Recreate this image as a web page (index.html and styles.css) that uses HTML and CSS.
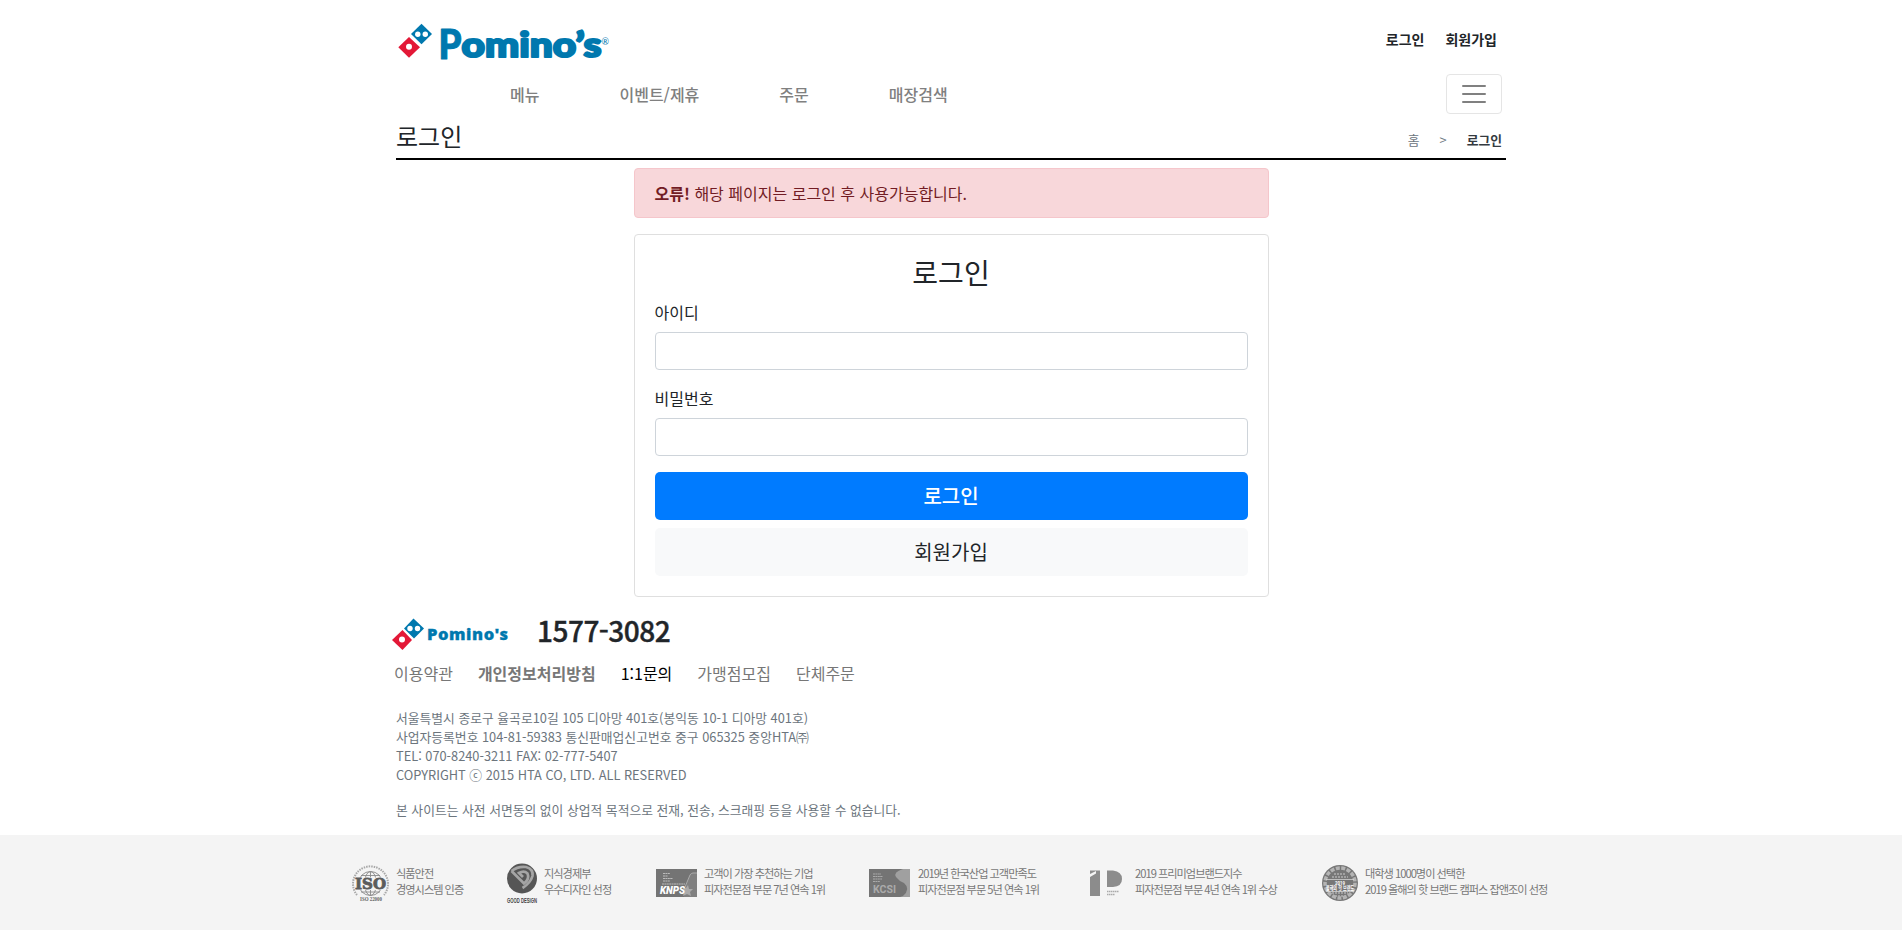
FILE: index.html
```html
<!DOCTYPE html>
<html lang="ko">
<head>
<meta charset="utf-8">
<title>로그인</title>
<link rel="stylesheet" href="styles.css">
</head>
<body>
<div class="container">
  <header class="top">
    <a class="brand">
      <svg class="brand-logo" width="216" height="44" viewBox="0 0 216 44">
        <path d="M25.500 3.700L36 14 25.500 24.300 15 14Z" fill="#0078ae"/>
        <path d="M13 17L24 27.300 13 37.700 2.300 27.300Z" fill="#e31837"/>
        <circle cx="21.800" cy="14.200" r="2.700" fill="#fff"/><circle cx="29.300" cy="14.200" r="2.700" fill="#fff"/>
        <circle cx="13" cy="26.800" r="3" fill="#fff"/>
        <text class="cap" x="42.500" y="38.500" textLength="23" lengthAdjust="spacingAndGlyphs">P</text>
        <text class="word" x="65.500" y="37" textLength="140" lengthAdjust="spacingAndGlyphs">omino’s</text>
        <text class="reg" x="205.500" y="25">®</text>
      </svg>
    </a>
    <nav class="user"><a>로그인</a><a>회원가입</a></nav>
  </header>
  <div class="navbar">
    <nav class="menu"><a>메뉴</a><a>이벤트/제휴</a><a>주문</a><a>매장검색</a></nav>
    <button class="toggler" aria-label="메뉴 열기">
      <svg width="30" height="30" viewBox="0 0 30 30"><path d="M4 7h22M4 15h22M4 23h22" stroke="#808080" stroke-width="2" stroke-linecap="round"/></svg>
    </button>
  </div>
  <div class="title-row">
    <h4>로그인</h4>
    <ol class="crumbs"><li>홈</li><li>&gt;</li><li class="active">로그인</li></ol>
  </div>
  <main class="login">
    <div class="alert"><strong>오류!</strong> 해당 페이지는 로그인 후 사용가능합니다.</div>
    <form class="card">
      <h3>로그인</h3>
      <label for="uid">아이디</label><input id="uid" type="text">
      <label for="upw">비밀번호</label><input id="upw" type="password">
      <button type="button" class="btn primary">로그인</button>
      <button type="button" class="btn light">회원가입</button>
    </form>
  </main>
  <footer class="footer">
    <div class="foot-head">
      <svg class="foot-logo" width="122" height="34" viewBox="0 0 122 34">
        <path d="M21.500 1.500L32 11.500 22 21.500 12 11.500Z" fill="#0078ae"/>
        <path d="M10.500 13L20 23 10.500 33 0 23Z" fill="#e31837"/>
        <circle cx="18" cy="11.500" r="2.700" fill="#fff"/><circle cx="25.500" cy="11.500" r="2.700" fill="#fff"/>
        <circle cx="10" cy="22.500" r="3" fill="#fff"/>
        <text class="foot-word" x="35" y="23" textLength="81">Pomino's</text>
      </svg>
      <span class="phone">1577-3082</span>
    </div>
    <ul class="links"><li>이용약관</li><li class="strong">개인정보처리방침</li><li class="dark">1:1문의</li><li>가맹점모집</li><li>단체주문</li></ul>
    <address>서울특별시 종로구 율곡로10길 105 디아망 401호(봉익동 10-1 디아망 401호)<br>사업자등록번호 104-81-59383 통신판매업신고번호 중구 065325 중앙HTA㈜<br>TEL: 070-8240-3211 FAX: 02-777-5407<br>COPYRIGHT ⓒ 2015 HTA CO, LTD. ALL RESERVED</address>
    <p class="notice">본 사이트는 사전 서면동의 없이 상업적 목적으로 전재, 전송, 스크래핑 등을 사용할 수 없습니다.</p>
  </footer>
</div>
<section class="awards">
  <ul>
    <li class="a1">
      <svg width="40" height="42" viewBox="0 0 40 42">
        <path d="M7 33A17.500 17.500 0 1 1 34 33" fill="none" stroke="#a8a8a8" stroke-width="2" stroke-dasharray="1.500 1"/>
        <g fill="none" stroke="#8a8a8a" stroke-width="0.900"><circle cx="20.500" cy="21.500" r="12"/><ellipse cx="20.500" cy="21.500" rx="6" ry="12"/><path d="M20.500 9.500v24M11 13.500h19M11 30h19"/></g>
        <path d="M5 15.500h31v12.500H5z" fill="#f4f4f4"/>
        <text class="iso" x="5" y="27" textLength="31" lengthAdjust="spacingAndGlyphs">ISO</text>
        <text class="iso-sub" x="10" y="38.500" textLength="22" lengthAdjust="spacingAndGlyphs">ISO 22000</text>
      </svg>
      <p>식품안전<br>경영시스템 인증</p>
    </li>
    <li class="a2">
      <svg width="32" height="44" viewBox="0 0 32 44">
        <circle cx="16" cy="16.500" r="15" fill="#565656"/>
        <path d="M5.500 9L18 21.500Q24 17 21.500 11.500Q18 8 13 11L17 15M5.500 9Q12 4 20 5Q27.500 7 26.500 14Q24.500 21 16.500 26" fill="none" stroke="#a5a5a5" stroke-width="2.700"/>
        <text class="good" x="1" y="41" textLength="30" lengthAdjust="spacingAndGlyphs">GOOD DESIGN</text>
      </svg>
      <p>지식경제부<br>우수디자인 선정</p>
    </li>
    <li class="a3">
      <svg width="41" height="28" viewBox="0 0 41 28">
        <path d="M0 0h41v28H0z" fill="#747474"/>
        <path d="M29 19L34 6Q35 4 37 4h4v24H28z" fill="#808080"/><path d="M29 18L34 6Q35 4 37 4h4" fill="none" stroke="#aaa"/>
        <path d="M7 4.500h7M7 7h5M7 9.500h10M7 12h7M6 15h23" stroke="#bbb" stroke-width="1" stroke-dasharray="2 .4"/>
        <path d="M32 16l1 4 4 0-3 3 1 4-4-2-4 2 1-4-2-3 4-1z" fill="#aaa"/>
        <text class="knps" x="4" y="25" textLength="25" lengthAdjust="spacingAndGlyphs">KNPS</text>
      </svg>
      <p>고객이 가장 추천하는 기업<br>피자전문점 부문 7년 연속 1위</p>
    </li>
    <li class="a4">
      <svg width="41" height="28" viewBox="0 0 41 28">
        <path d="M0 0h41v28H0z" fill="#747474"/>
        <path d="M41 0H34Q24 3 27 8Q30 12 35 14Q42 20 34 27L31 28H41Z" fill="#a0a0a0"/>
        <path d="M4 5h8M4 7.500h10M4 10h9M4 12.500h7" stroke="#aaa" stroke-dasharray="2 .4"/>
        <text class="kcsi" x="4" y="24" textLength="23" lengthAdjust="spacingAndGlyphs">KCSI</text>
      </svg>
      <p>2019년 한국산업 고객만족도<br>피자전문점 부문 5년 연속 1위</p>
    </li>
    <li class="a5">
      <svg width="44" height="34" viewBox="0 0 44 34">
        <path d="M6 4.500H16V30H6V11L12 7.500V5L6 8Z" fill="#8c8c8c"/>
        <path d="M23 4.500H29Q38 5.500 38 13T29 21H23Z" fill="#8c8c8c"/>
        <path d="M23 25.500h12M23 28.500h8" stroke="#aaa" stroke-width="1.300" stroke-dasharray="1.500 .5"/>
      </svg>
      <p>2019 프리미엄브랜드지수<br>피자전문점 부문 4년 연속 1위 수상</p>
    </li>
    <li class="a6">
      <svg width="38" height="38" viewBox="0 0 38 38">
        <circle cx="19" cy="18" r="18" fill="#777"/>
        <circle cx="19" cy="18" r="15" fill="none" stroke="#b4b4b4" stroke-width="3.500" stroke-dasharray="4 1.500"/>
        <path d="M11 12h16M13 9h12M11 28h16M14 31h10" stroke="#b0b0b0" stroke-width="1.500" stroke-dasharray="2 1"/>
        <path d="M5 14.500h28M5 26.500h28" stroke="#ddd" stroke-width=".7"/>
        <text class="seal" x="14" y="19.500" textLength="10" lengthAdjust="spacingAndGlyphs">2019</text>
        <text class="seal-kr" x="5" y="25" textLength="28" lengthAdjust="spacingAndGlyphs">올해의 핫 브랜드</text>
      </svg>
      <p>대학생 1000명이 선택한<br>2019 올해의 핫 브랜드 캠퍼스 잡앤조이 선정</p>
    </li>
  </ul>
</section>
</body>
</html>
```
FILE: styles.css
```css
* { box-sizing: border-box; }
body { margin: 0; font: 400 16px/24px "Noto Sans CJK KR", sans-serif; color: #212529; background: #fff; height: 930px; display: flex; flex-direction: column; }
h3, h4, p, ul, ol { margin: 0; padding: 0; font-weight: 400; }
ul, ol { list-style: none; }
svg { overflow: visible; }
.container { width: 1110px; margin: 0 auto; flex: none; height: 835px; }
.top { height: 70px; display: flex; justify-content: space-between; padding-top: 20px; }
.brand-logo { display: block; }
.cap, .word { font: 900 35px Lato, sans-serif; fill: #0078ae; stroke: #0078ae; stroke-width: 2.2px; stroke-linejoin: round; }
.cap { font-size: 41px; stroke-width: 1px; }
.reg { font: 9px Lato, sans-serif; fill: #0078ae; }
.user { display: flex; gap: 21px; padding: 7px 9px 0 0; font-size: 14px; font-weight: 700; }
.navbar { display: flex; justify-content: space-between; height: 48px; padding: 4px 4px 0 114px; }
.menu { display: flex; gap: 80px; font-weight: 500; color: #808080; padding-top: 8px; }
.toggler { width: 56px; height: 40px; border: 1px solid #e5e5e5; border-radius: 4px; background: #fff; padding: 4px 12px; }
.toggler svg { display: block; }
.title-row { height: 42px; border-bottom: 2px solid #000; display: flex; justify-content: space-between; }
.title-row h4 { font-size: 24px; line-height: 29px; padding-top: 3px; }
.crumbs { display: flex; gap: 20px; font-size: 12.8px; color: #6c757d; padding: 10px 4px 0 0; }
.crumbs .active { font-weight: 700; color: #343a40; }
.login { width: 635px; margin: 8px auto 0; }
.alert { height: 50px; background: #f8d7da; border: 1px solid #f5c6cb; border-radius: 4px; color: #721c24; padding: 12px 20px; margin-bottom: 16px; }
.alert strong { font-weight: 700; }
.card { height: 363px; border: 1px solid #dfdfdf; border-radius: 4px; padding: 20px; display: flex; flex-direction: column; }
.card h3 { font-size: 28px; line-height: 34px; text-align: center; margin-bottom: 11px; }
.card label { margin-bottom: 8px; }
.card input { height: 38px; flex: none; border: 1px solid #ced4da; border-radius: 4px; margin: 0 0 16px; }
.btn { height: 48px; flex: none; border: 0; border-radius: 5px; font: 400 20px/30px "Noto Sans CJK KR", sans-serif; margin: 0 0 8px; }
.primary { background: #007bff; color: #fff; font-weight: 500; }
.light { background: #f8f9fa; color: #212529; }
.foot-head { display: flex; height: 50px; margin: 20px 0 0 -4px; }
.foot-logo { flex: none; }
.foot-word { font: 900 16.500px "Noto Sans", "Open Sans", sans-serif; fill: #0078ae; stroke: #0078ae; stroke-width: .3px; }
.phone { font-size: 28px; line-height: 34px; font-weight: 500; letter-spacing: -.5px; -webkit-text-stroke: .4px #212529; margin-left: 23px; margin-top: -4px; }
.links { display: flex; gap: 25px; color: #777; margin: -6px 0 0 -2px; }
.strong { font-weight: 700; }
.dark { color: #000; }
address { font-style: normal; font-size: 12.8px; line-height: 19px; color: #6c757d; margin-top: 23px; }
.notice { font-size: 12.8px; line-height: 19px; color: #6c757d; margin-top: 16px; }
.awards { flex: 1; background: #f4f4f4; }
.awards ul { display: flex; padding: 27px 0 0 350px; }
.awards li { display: flex; flex: none; height: 50px; }
.awards svg { flex: none; }
.awards p { font-size: 11.200px; line-height: 16px; letter-spacing: -1px; color: #777; white-space: nowrap; padding-top: 3px; }
.a1 { width: 156px; } .a1 svg { margin-right: 6px; }
.a2 { width: 150px; } .a2 svg { margin-right: 6px; }
.a3 { width: 213px; } .a3 svg { margin: 7px 7px 0 0; }
.a4 { width: 215px; } .a4 svg { margin: 7px 8px 0 0; }
.a5 { width: 237px; } .a5 svg { margin: 4px 7px 0 0; }
.a6 svg { margin: 3px 6px 0 0; }
.iso { font: 700 15px "DejaVu Serif", serif; fill: #5c5c5c; stroke: #5c5c5c; stroke-width: .8px; }
.iso-sub { font: 700 5.500px "Liberation Serif", serif; fill: #666; }
.good { font: 700 6.500px "Liberation Sans", sans-serif; fill: #444; }
.knps { font: italic 900 10.500px Roboto, sans-serif; fill: #fff; }
.kcsi { font: 700 10.500px Roboto, sans-serif; fill: #aaa; }
.seal { font: 700 5px Roboto, sans-serif; fill: #fff; }
.seal-kr { font: 700 6px "Noto Sans CJK KR", sans-serif; fill: #fff; }
```
